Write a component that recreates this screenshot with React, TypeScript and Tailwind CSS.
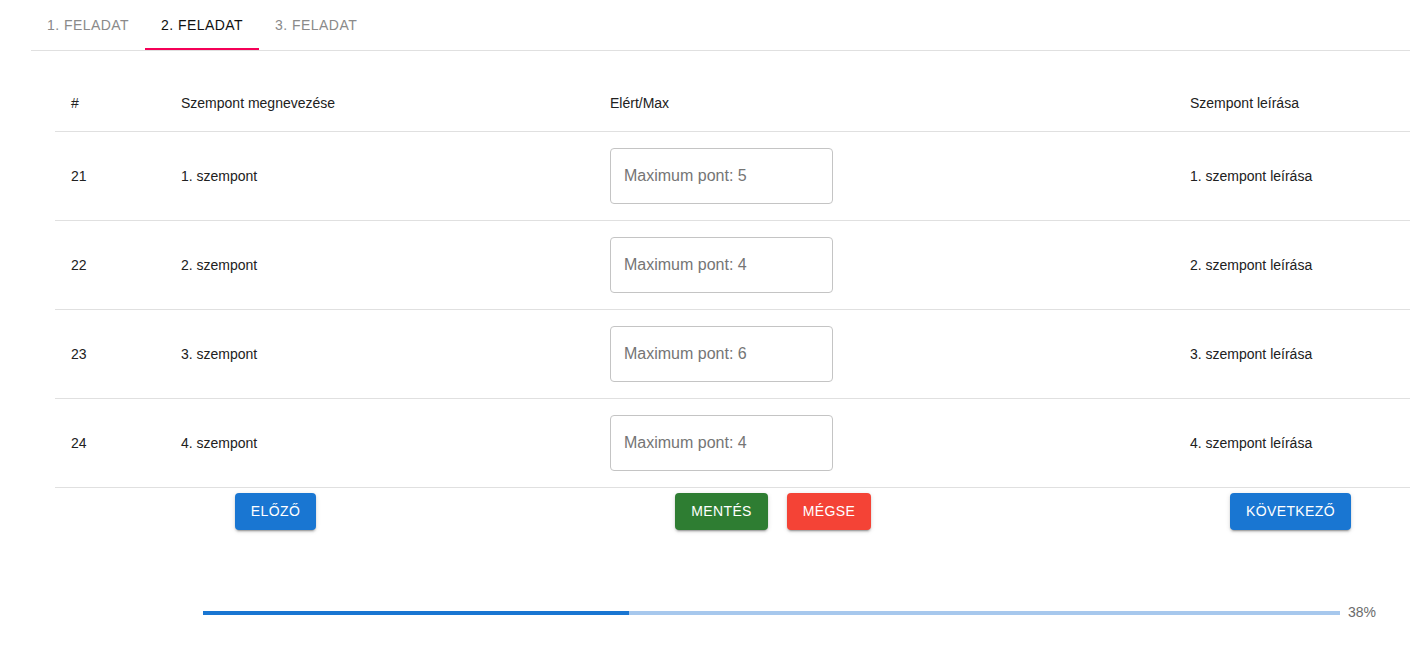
import React from "react";

const rows = [
  { id: 21, name: "1. szempont", max: 5, desc: "1. szempont leírása" },
  { id: 22, name: "2. szempont", max: 4, desc: "2. szempont leírása" },
  { id: 23, name: "3. szempont", max: 6, desc: "3. szempont leírása" },
  { id: 24, name: "4. szempont", max: 4, desc: "4. szempont leírása" },
];

const btnShadow =
  "shadow-[0_3px_1px_-2px_rgba(0,0,0,0.2),0_2px_2px_0_rgba(0,0,0,0.14),0_1px_5px_0_rgba(0,0,0,0.12)]";

export default function App() {
  const progress = 37.5;
  return (
    <div className="w-[1410px] h-[664px] bg-white overflow-hidden font-['Liberation_Sans',Arial,sans-serif] text-[#212121]">
      {/* Tabs */}
      <div className="ml-[31px] flex border-b border-[#e0e0e0] h-[51px]">
        {["1. FELADAT", "2. FELADAT", "3. FELADAT"].map((t, i) => (
          <div
            key={t}
            className={`relative h-[50px] px-4 flex items-center text-[14px] tracking-[0.45px] uppercase ${
              i === 1 ? "text-[#111]" : "text-[#8a8a8a]"
            }`}
          >
            {t}
            {i === 1 && (
              <div className="absolute left-0 right-0 bottom-0 h-[2px] bg-[#f50057]" />
            )}
          </div>
        ))}
      </div>

      {/* Table */}
      <div className="ml-[55px] mt-[24px] text-[14px]">
        <div className="grid grid-cols-[110px_429px_580px_1fr] h-[57px] items-center border-b border-[#e0e0e0]">
          <div className="pl-4">#</div>
          <div className="pl-4">Szempont megnevezése</div>
          <div className="pl-4">Elért/Max</div>
          <div className="pl-4">Szempont leírása</div>
        </div>
        {rows.map((r) => (
          <div
            key={r.id}
            className="grid grid-cols-[110px_429px_580px_1fr] h-[89px] items-center border-b border-[#e0e0e0]"
          >
            <div className="pl-4">{r.id}</div>
            <div className="pl-4">{r.name}</div>
            <div className="pl-4">
              <input
                className="w-[223px] h-[56px] border border-[#c4c4c4] rounded-[4px] px-[13px] text-[16px] outline-none placeholder:text-[#757575] font-['Liberation_Sans',Arial,sans-serif]"
                placeholder={`Maximum pont: ${r.max}`}
              />
            </div>
            <div className="pl-4">{r.desc}</div>
          </div>
        ))}

        {/* Buttons */}
        <div className="flex items-start pt-[5px] font-['Liberation_Sans',Arial,sans-serif] text-[14px] font-normal tracking-[0.4px] text-white">
          <button className={`ml-[180px] h-[37px] w-[81px] rounded-[4px] bg-[#1976d2] ${btnShadow}`}>
            ELŐZŐ
          </button>
          <button className={`ml-[359px] h-[37px] w-[93px] rounded-[4px] bg-[#2e7d32] ${btnShadow}`}>
            MENTÉS
          </button>
          <button className={`ml-[19px] h-[37px] w-[84px] rounded-[4px] bg-[#f44336] ${btnShadow}`}>
            MÉGSE
          </button>
          <button className={`ml-[359px] h-[37px] w-[121px] rounded-[4px] bg-[#1976d2] ${btnShadow}`}>
            KÖVETKEZŐ
          </button>
        </div>
      </div>

      {/* Progress */}
      <div className="ml-[203px] mt-[72px] flex items-center">
        <div className="w-[1137px] h-[4px] bg-[#a7c8ed] overflow-hidden">
          <div className="h-full bg-[#1976d2]" style={{ width: `${progress}%` }} />
        </div>
        <div className="ml-[8px] text-[14px] text-[#6b6b6b]">38%</div>
      </div>
    </div>
  );
}
